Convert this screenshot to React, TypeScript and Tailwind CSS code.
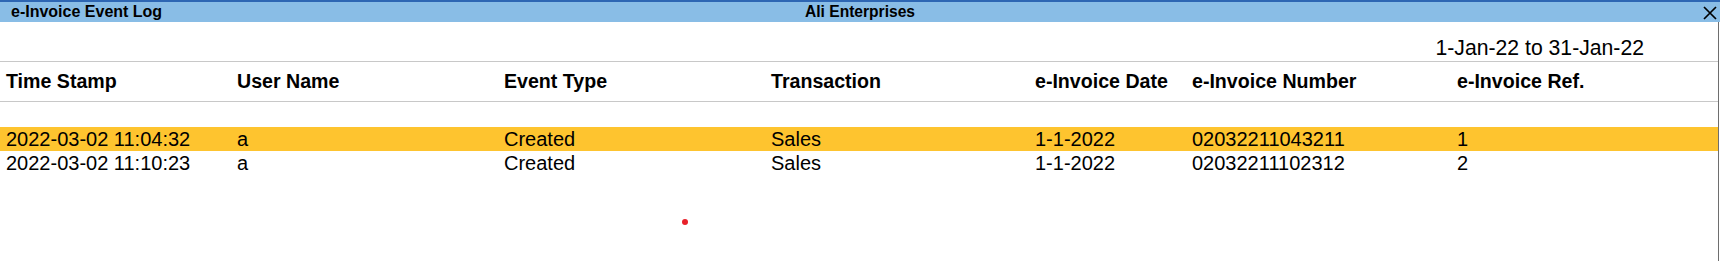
const columns = [
  "Time Stamp",
  "User Name",
  "Event Type",
  "Transaction",
  "e-Invoice Date",
  "e-Invoice Number",
  "e-Invoice Ref.",
]

const rows = [
  ["2022-03-02 11:04:32", "a", "Created", "Sales", "1-1-2022", "02032211043211", "1"],
  ["2022-03-02 11:10:23", "a", "Created", "Sales", "1-1-2022", "02032211102312", "2"],
]

const gridCols = "grid grid-cols-[231px_267px_267px_264px_157px_265px_1fr] pl-[6px]"

export default function App() {
  return (
    <div
      className="relative h-[261px] w-full overflow-hidden bg-white text-black"
      style={{ fontFamily: '"Liberation Sans", Arial, sans-serif' }}
    >
      {/* title bar */}
      <div className="border-t-2 border-[#2d66b3] bg-[#89bde6]">
        <div className="grid h-[20px] grid-cols-[1fr_auto_1fr] items-center">
          <div className="pl-[11px] text-[16px] font-bold leading-[20px]">e-Invoice Event Log</div>
          <div className="text-[15.6px] font-bold leading-[20px]">Ali Enterprises</div>
          <div className="flex justify-end pr-[3px]">
            <svg width="14" height="14" viewBox="0 0 14 14" className="mt-[1px]">
              <path d="M1 1 L13 13 M13 1 L1 13" stroke="#000" strokeWidth="1.7" fill="none" />
            </svg>
          </div>
        </div>
      </div>

      {/* body */}
      <div className="mr-[1px] h-[239px] border-r border-[#6e6e6e]">
        <div className="flex h-[40px] items-end justify-end border-b border-[#c8c8c8] pr-[74px] pb-[1px]">
          <span className="text-[21.2px] leading-[24px]">1-Jan-22 to 31-Jan-22</span>
        </div>

        <div className={`${gridCols} h-[40px] border-b border-[#c8c8c8] pt-[7px]`}>
          {columns.map((c) => (
            <div key={c} className="text-[19.6px] font-bold leading-[24px] whitespace-nowrap">
              {c}
            </div>
          ))}
        </div>

        <div className="mt-[25px]">
          {rows.map((r, i) => (
            <div
              key={i}
              className={`${gridCols} h-[24px] ${i === 0 ? "bg-[#fec42f]" : ""}`}
            >
              {r.map((cell, j) => (
                <div key={j} className="text-[20px] leading-[24px] whitespace-nowrap">
                  {cell}
                </div>
              ))}
            </div>
          ))}
        </div>
      </div>

      {/* stray cursor dot */}
      <div className="absolute left-[682px] top-[219px] h-[6px] w-[6px] rounded-full bg-[#e8202a]" />
    </div>
  )
}
